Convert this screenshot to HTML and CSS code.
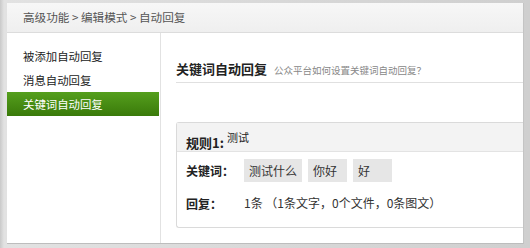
FILE: index.html
```html
<!DOCTYPE html>
<html lang="zh-CN">
	<head>
		<title>自动回复</title>
		<meta charset="utf-8">
		<link rel="stylesheet" href="styles.css">
	</head>
	<body>
		<div class="frame">
			<div class="crumbs">高级功能 &gt; 编辑模式 &gt; 自动回复</div>

			<div class="layout">
				<ul class="sidebar">
					<li>被添加自动回复</li>
					<li>消息自动回复</li>
					<li class="active">关键词自动回复</li>
				</ul>

				<div class="main">
					<div class="title-bar">
						<h2>关键词自动回复</h2>
						<span class="help">公众平台如何设置关键词自动回复？</span>
					</div>

					<div class="rule">
						<div class="rule-head">
							<b>规则1:</b><span class="rule-name">测试</span>
						</div>
						<div class="rule-body">
							<div class="row">
								<span class="label">关键词：</span>
								<span class="tag">测试什么</span>
								<span class="tag">你好</span>
								<span class="tag">好</span>
							</div>
							<div class="row">
								<span class="label">回复：</span>
								<span class="reply">1条 （1条文字，0个文件，0条图文）</span>
							</div>
						</div>
					</div>
				</div>
			</div>
		</div>
	</body>
</html>
```

FILE: styles.css
```css
/*
 * RESET
 */
* { margin: 0; padding: 0; box-sizing: border-box; }
ul { list-style: none; }

/*
 * FONTS
 */
body { font-family: "Noto Sans CJK SC", "Liberation Sans", sans-serif; font-size: 12px; color: #333; }
.label, .reply, .help { font-family: "Noto Sans CJK TC", "Noto Sans CJK SC", sans-serif; }

/*
 * LAYOUT
 */
html, body { height: 100%; overflow: hidden; }
body {
	background: linear-gradient(90deg, #c9c9c9, #e2e2e2 4px, #cfcfcf);
	padding: 3px 6px 4px 7px;
}

.frame {
	height: 241px;
	background: #fff;
	border-right: 1px solid #c4c4c4;
	border-bottom: 1px solid #bdbdbd;
	display: flex; flex-direction: column;
	overflow: hidden;
}

.crumbs {
	height: 30px; line-height: 29px;
	padding-left: 16px;
	font-size: 11.6px;
	color: #555;
	background: linear-gradient(#f7f7f7, #efefef);
	border-bottom: 1px solid #dcdcdc;
}

.layout { flex: 1; display: flex; }

.sidebar {
	width: 154px;
	padding-top: 11px;
	border-right: 1px solid #e2e2e2;
}
.sidebar li {
	height: 24px; line-height: 24px;
	padding-left: 16px;
	font-size: 11.4px;
	color: #222;
	margin-right: 1px;
}
.sidebar li.active {
	color: #fff;
	background: linear-gradient(#559f1d, #3a7a0a);
}

.main { flex: 1; padding-left: 15px; }

.title-bar {
	margin-top: 25px;
	padding-bottom: 3px;
	border-bottom: 1px solid #e0e0e0;
	display: flex; align-items: baseline; gap: 7px;
}
.title-bar h2 { font-size: 13px; line-height: 21px; color: #222; }
.help { font-size: 9.5px; color: #888; }

.rule {
	margin-top: 39px;
	border: 1px solid #dadada;
	border-right: none;
	border-radius: 3px 0 0 3px;
}
.rule-head {
	height: 29px;
	padding: 4px 0 0 9px;
	background: #f3f3f3;
	border-bottom: 1px solid #e3e3e3;
	color: #222;
	line-height: 21px;
}
.rule-head b { font-size: 13px; vertical-align: -3px; }
.rule-name { font-size: 11px; vertical-align: 3px; margin-left: 3px; }

.rule-body { padding: 7px 0 14px 9px; }
.row { display: flex; align-items: center; gap: 6px; }
.row + .row { margin-top: 11px; }
.label { width: 52px; font-weight: bold; color: #222; }
.tag {
	height: 23px; line-height: 23px;
	min-width: 39px;
	padding: 0 5px;
	background: #e6e6e6;
	color: #333;
}
.reply { color: #333; line-height: 20px; }
```
